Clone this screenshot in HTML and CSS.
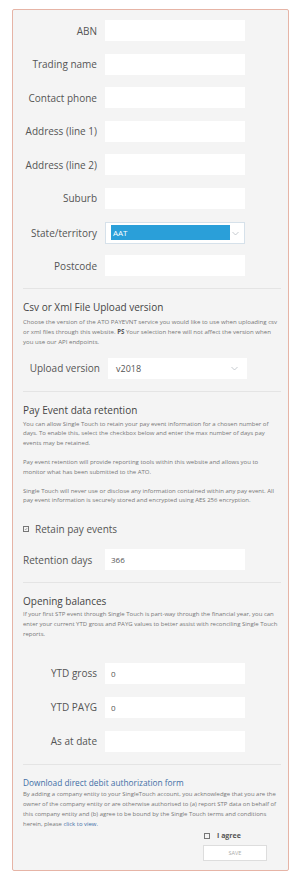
FILE: index.html
```html
<!DOCTYPE html>
<html lang="en">

<head>
    <meta charset="UTF-8">
    <meta name="viewport" content="width=device-width, initial-scale=1.0">
    <title>Company details</title>
    <link rel="stylesheet" href="styles.css">
</head>

<body>

    <div class="panel">

        <!-- Company details -->
        <div class="rows">
            <div class="row"><label class="lbl">ABN</label><div class="field"></div></div>
            <div class="row"><label class="lbl">Trading name</label><div class="field"></div></div>
            <div class="row"><label class="lbl">Contact phone</label><div class="field"></div></div>
            <div class="row"><label class="lbl">Address (line 1)</label><div class="field"></div></div>
            <div class="row"><label class="lbl">Address (line 2)</label><div class="field"></div></div>
            <div class="row"><label class="lbl">Suburb</label><div class="field"></div></div>
            <div class="row">
                <label class="lbl">State/territory</label>
                <div class="field select state">
                    <span class="picked">AAT</span>
                    <svg class="chevron" width="7" height="5" viewBox="0 0 7 5"><path d="M0.5 1 L3.5 4 L6.5 1" fill="none" stroke="#b8bec4" stroke-width="0.8"/></svg>
                </div>
            </div>
            <div class="row"><label class="lbl">Postcode</label><div class="field"></div></div>
        </div>

        <hr class="divider">

        <!-- Upload version -->
        <h3 class="heading">Csv or Xml File Upload version</h3>
        <p class="note first wide">Choose the version of the ATO PAYEVNT service you would like to use when uploading csv or xml files through this website. <b>PS</b> Your selection here will not affect the version when you use our API endpoints.</p>
        <div class="row upload">
            <label class="lbl">Upload version</label>
            <div class="field select">
                <span class="value">v2018</span>
                <svg class="chevron" width="7" height="5" viewBox="0 0 7 5"><path d="M0.5 1 L3.5 4 L6.5 1" fill="none" stroke="#b8bec4" stroke-width="0.8"/></svg>
            </div>
        </div>

        <hr class="divider">

        <!-- Retention -->
        <h3 class="heading">Pay Event data retention</h3>
        <p class="note first">You can allow Single Touch to retain your pay event information for a chosen number of days. To enable this, select the checkbox below and enter the max number of days pay events may be retained.</p>
        <p class="note">Pay event retention will provide reporting tools within this website and allows you to monitor what has been submitted to the ATO.</p>
        <p class="note">Single Touch will never use or disclose any information contained within any pay event. All pay event information is securely stored and encrypted using AES 256 encryption.</p>

        <div class="check-row">
            <span class="box">
                <svg width="6" height="6" viewBox="0 0 6 6"><path d="M1.2 3 L2.5 4.3 L4.8 1.6" fill="none" stroke="#666" stroke-width="0.8"/></svg>
            </span>
            Retain pay events
        </div>

        <div class="row retention">
            <label class="lbl left">Retention days</label>
            <div class="field"><span class="value small">366</span></div>
        </div>

        <hr class="divider">

        <!-- Opening balances -->
        <h3 class="heading">Opening balances</h3>
        <p class="note tight">If your first STP event through Single Touch is part-way through the financial year, you can enter your current YTD gross and PAYG values to better assist with reconciling Single Touch reports.</p>

        <div class="rows balances">
            <div class="row"><label class="lbl">YTD gross</label><div class="field"><span class="value small">0</span></div></div>
            <div class="row"><label class="lbl">YTD PAYG</label><div class="field"><span class="value small">0</span></div></div>
            <div class="row"><label class="lbl">As at date</label><div class="field"></div></div>
        </div>

        <hr class="divider">

        <!-- Terms -->
        <a class="download" href="#">Download direct debit authorization form</a>
        <p class="note terms">By adding a company entity to your SingleTouch account, you acknowledge that you are the owner of the company entity or are otherwise authorised to (a) report STP data on behalf of this company entity and (b) agree to be bound by the Single Touch terms and conditions herein, please <a href="#">click to view.</a></p>

        <div class="agree">
            <div class="agree-line"><span class="box"></span><b>I agree</b></div>
            <button class="save">SAVE</button>
        </div>

    </div>

</body>

</html>
```

FILE: styles.css
```css
body {
    margin: 0;
    background-color: #fff;
    font-family: "Open Sans", Arial, sans-serif;
    color: #555;
}

.panel {
    width: 277px;
    margin: 9px 0 0 12px;
    padding: 10px 7px 9px 10px;
    box-sizing: border-box;
    background-color: #f4f4f4;
    border: 1px solid #e6b4a6;
    border-radius: 2px;
}

.rows {
    display: flex;
    flex-direction: column;
    gap: 12.6px;
}

.row {
    display: grid;
    grid-template-columns: 74px 140px;
    column-gap: 8px;
    align-items: center;
    height: 21px;
}

.lbl {
    font-size: 10px;
    text-align: right;
    white-space: nowrap;
}

.lbl.left {
    text-align: left;
}

.field {
    height: 21px;
    background-color: #fff;
    display: flex;
    align-items: center;
    box-sizing: border-box;
}

.select {
    position: relative;
}

.state {
    height: 22px;
    border: 1px solid #d6e1ea;
    padding: 0 0 0 5px;
}

.picked {
    width: 119px;
    height: 15px;
    line-height: 15px;
    background-color: #2a9fd9;
    color: #fff;
    font-size: 8px;
    padding-left: 2px;
    box-sizing: border-box;
}

.chevron {
    position: absolute;
    right: 9px;
    top: 8px;
}

.state .chevron {
    right: 5px;
}

.value {
    font-size: 9px;
    color: #555;
    padding-left: 8px;
}

.value.small {
    font-size: 8px;
    padding-left: 6px;
}

.divider {
    border: none;
    border-top: 1px solid #e4e4e4;
    margin: 12px 0 0 0;
}

.heading {
    font-size: 10px;
    font-weight: normal;
    line-height: 14px;
    color: #444;
    margin: 11px 0 0 0;
}

.note {
    font-size: 6px;
    line-height: 9.8px;
    color: #777;
    margin: 9px 0 0 0;
}

.note.wide {
    font-size: 6.1px;
}

.note.first {
    margin-top: 3px;
}

.note.tight {
    margin-top: 2px;
}

.note b {
    color: #555;
}

.upload {
    grid-template-columns: 77px 139px;
    margin-top: 11px;
}

.check-row {
    display: flex;
    align-items: center;
    gap: 6px;
    font-size: 10px;
    line-height: 14px;
    margin-top: 16px;
}

.box {
    width: 6px;
    height: 6px;
    border: 1px solid #777;
    box-sizing: border-box;
    display: inline-flex;
    align-items: center;
    justify-content: center;
}

.retention {
    margin-top: 13px;
}

.balances {
    margin-top: 23px;
    gap: 13px;
}

.download {
    display: block;
    margin-top: 12px;
    font-size: 8.3px;
    line-height: 12px;
    color: #3e6ea6;
    text-decoration: none;
}

.note.terms {
    margin-top: 0;
    font-size: 5.95px;
    line-height: 10.3px;
}

.note a {
    color: #3e6ea6;
    text-decoration: none;
}

.agree {
    width: 64px;
    margin-left: 180px;
    margin-top: 1px;
}

.agree-line {
    display: flex;
    align-items: center;
    gap: 7px;
    font-size: 7px;
    line-height: 10px;
    color: #555;
    padding-left: 1px;
}

.save {
    display: block;
    width: 64px;
    height: 16px;
    margin-top: 4px;
    background-color: #fff;
    border: 1px solid #ddd;
    color: #aaa;
    font-family: "Open Sans", Arial, sans-serif;
    font-size: 5.5px;
    padding: 0;
    cursor: pointer;
}
```
